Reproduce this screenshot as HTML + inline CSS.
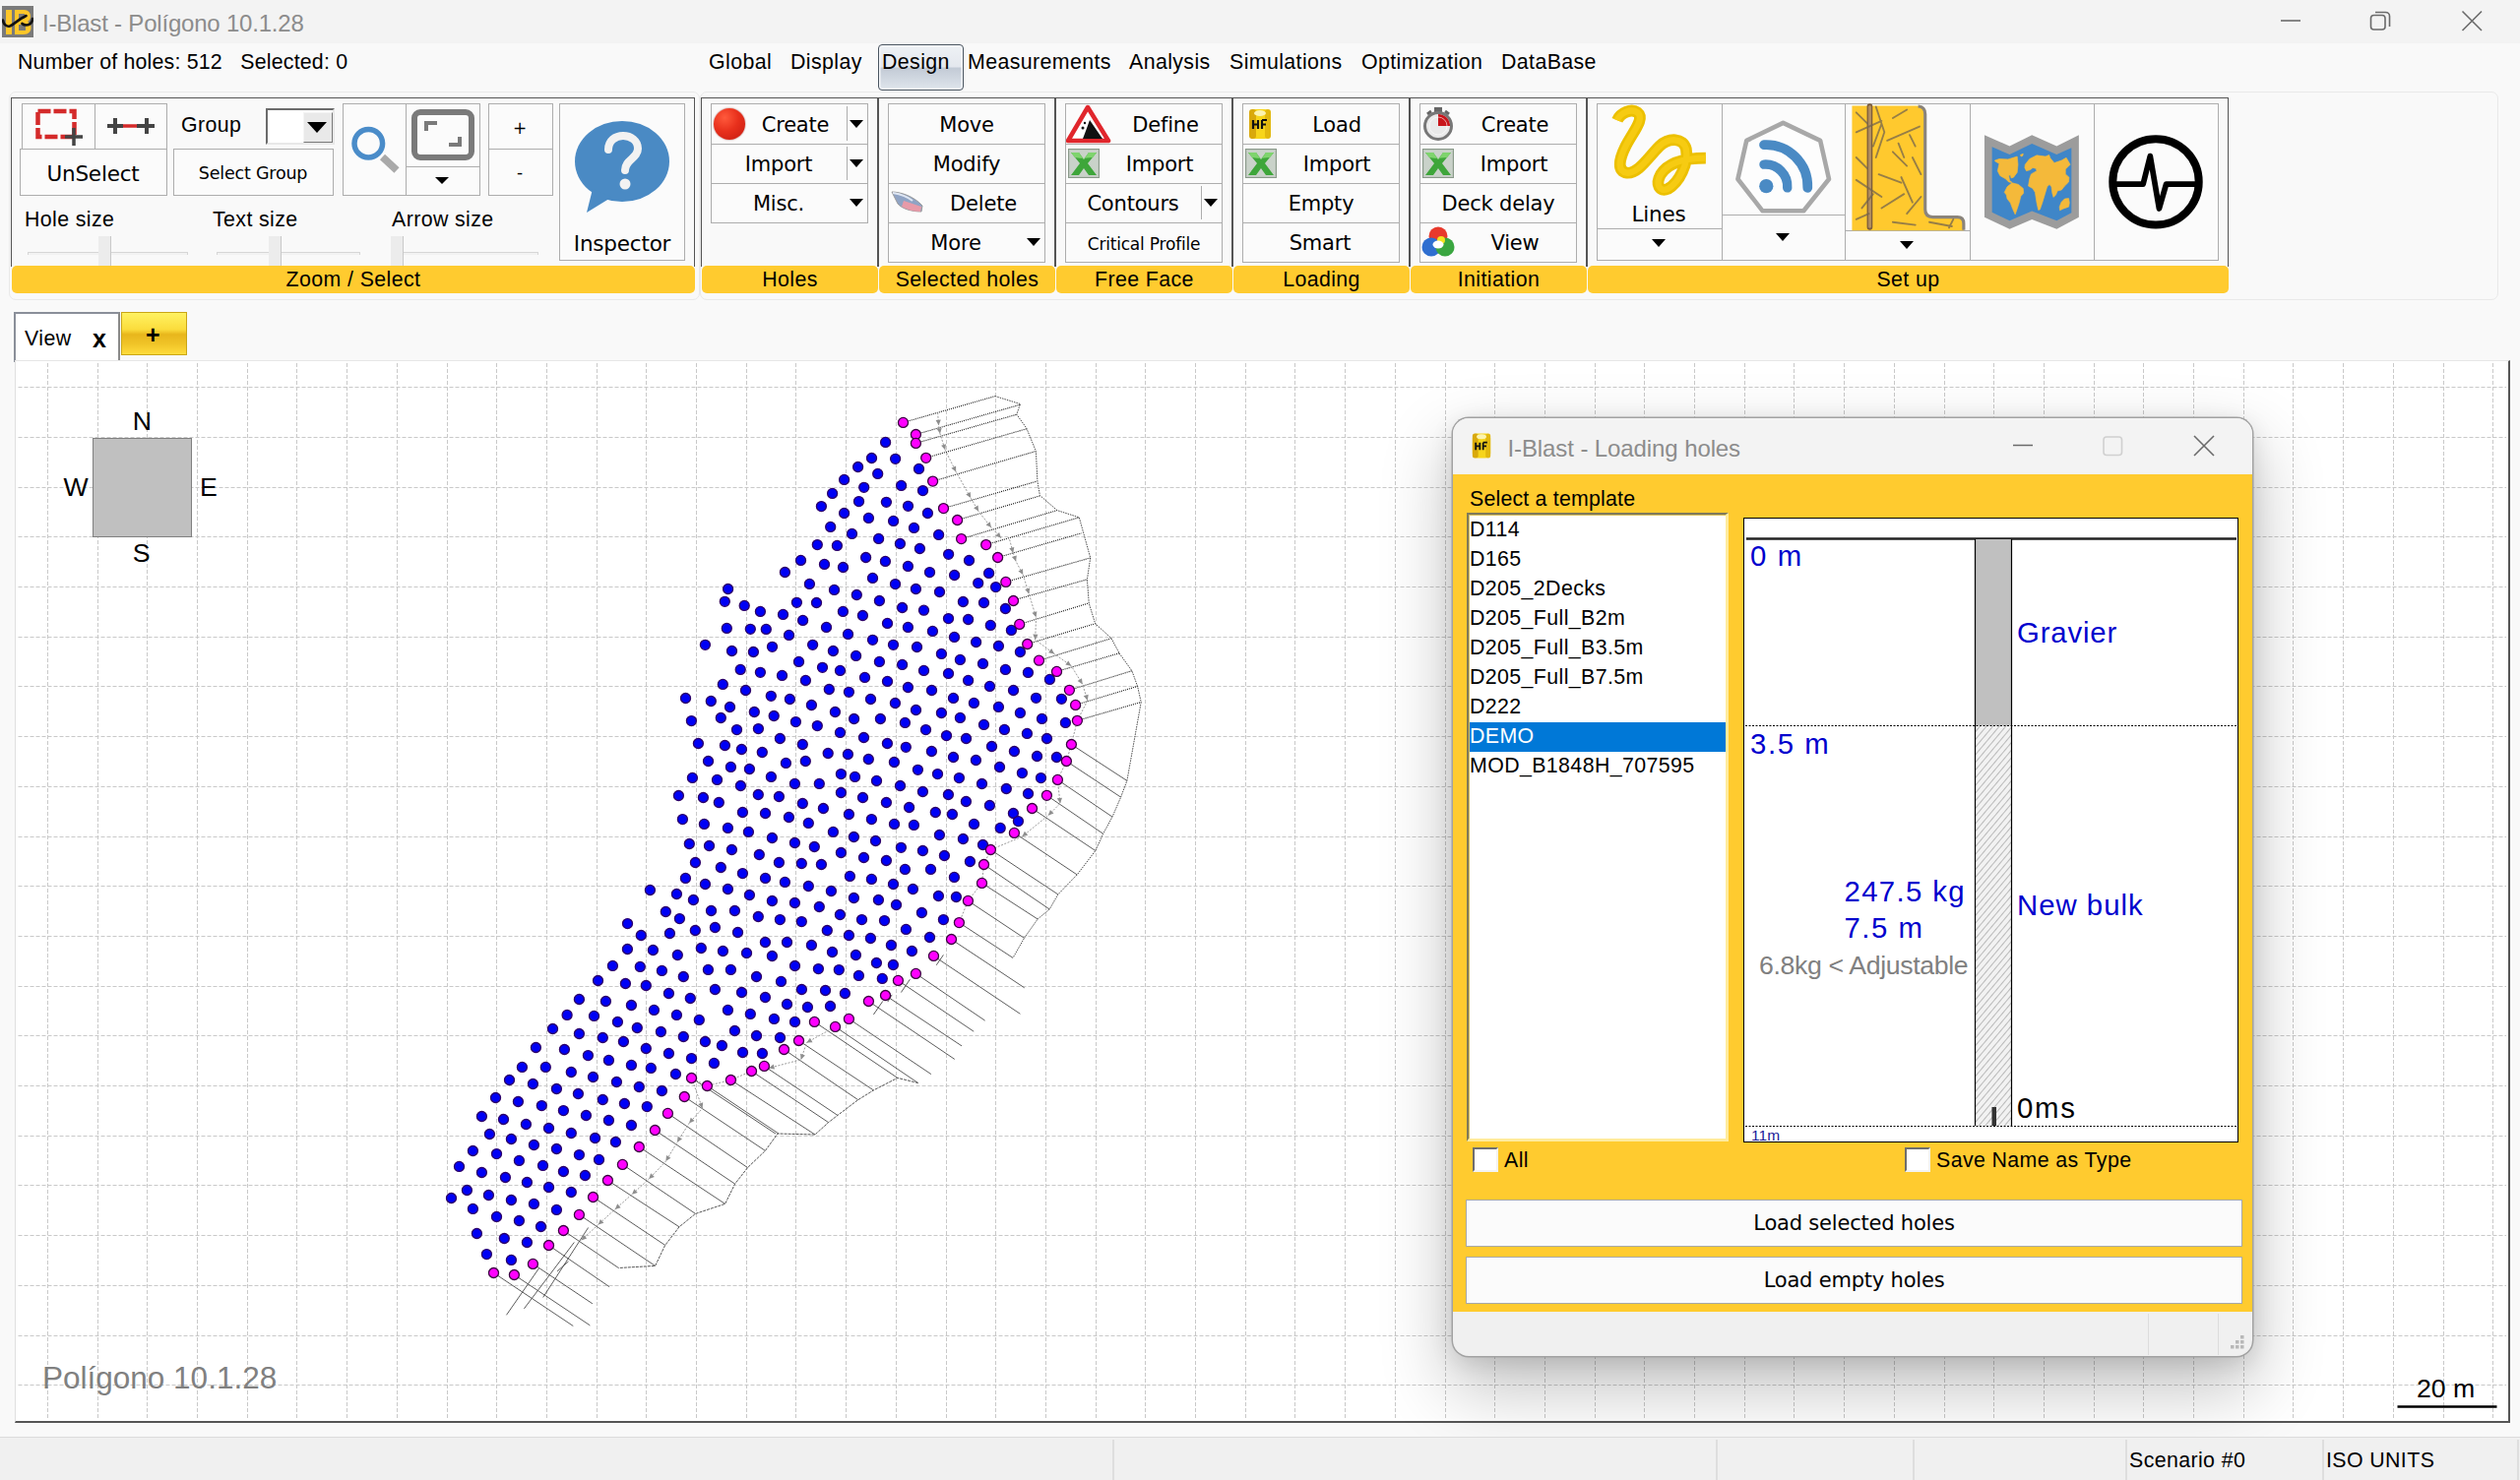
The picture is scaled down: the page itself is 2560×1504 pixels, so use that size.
<!DOCTYPE html>
<html lang="en">
<head>
<meta charset="utf-8">
<title>I-Blast - Polígono 10.1.28</title>
<style>
*{box-sizing:border-box;margin:0;padding:0}
html,body{width:2560px;height:1504px;overflow:hidden;background:#f9f9f9;font-family:"Liberation Sans",sans-serif;font-size:21.33px;color:#000;letter-spacing:0.4px}
.a{position:absolute}
.t{position:absolute;white-space:nowrap;line-height:1}
.cm{font-family:"DejaVu Sans","Liberation Sans",sans-serif;font-size:21px;letter-spacing:-0.2px}
#titlebar{left:0;top:0;width:2560px;height:44px;background:#f3f3f3}
#ribbon{left:10px;top:93px;width:2528px;height:212px;border:1.5px solid #e6e6e6;border-radius:7px;background:#f9f9f9}
.grp{position:absolute;top:99px;height:172px;border:1.2px solid #555;border-bottom:none;background:#f9f9f9}
.bar{position:absolute;top:270px;height:28px;background:#ffcb2f;border-radius:5px;text-align:center;line-height:29px;font-size:21.33px;letter-spacing:0.4px}
.btn{position:absolute;border:1px solid #adadad;background:#fbfbfb;text-align:center;white-space:nowrap}
.arr{position:absolute;width:0;height:0;border-left:7px solid transparent;border-right:7px solid transparent;border-top:8px solid #000}
#status{left:0;top:1460px;width:2560px;height:44px;background:#f0f0f0;border-top:1.5px solid #dcdcdc}
#canvas{left:15px;top:366px;width:2535px;height:1080px;background:#fff;border-top:1.5px solid #e6e6e6;border-left:1.5px solid #e0e0e0;border-right:2px solid #555;border-bottom:2px solid #555;overflow:hidden}
</style>
</head>
<body>
<div class="a" id="titlebar">
 <svg class="a" style="left:2px;top:6px" width="32" height="32" viewBox="0 0 32 32">
  <rect width="32" height="32" fill="#7a7a7a"/>
  <rect x="4" y="4" width="6" height="25" fill="#ffc629"/>
  <path d="M13 4h9c5 0 7 3 7 6.5 0 2.500-1 4.500-3 5.500 2.500 1 3.500 3 3.500 6 0 4-2.500 7-7.500 7h-9z" fill="#ffc629"/>
  <rect x="17" y="8" width="6" height="5" fill="#7a7a7a"/><rect x="17" y="19" width="7" height="6" fill="#7a7a7a"/>
  <path d="M1 14.500C1.500 19 5 21.500 8 20.500C12 19 16 14 24.500 10M31 13C31 17 28 19.500 25 19.500C23 19.500 21.500 19 20.500 18" fill="none" stroke="#111" stroke-width="2.600" stroke-linecap="round"/>
 </svg>
 <div class="t" style="left:43px;top:11.5px;font-size:24px;color:#8c8c8c;letter-spacing:-0.2px">I-Blast - Polígono 10.1.28</div>
 <svg class="a" style="left:2300px;top:0" width="260" height="44" viewBox="0 0 260 44" fill="none" stroke="#6a6a6a" stroke-width="1.600">
  <path d="M17 21h20"/>
  <rect x="108.500" y="15.500" width="14.500" height="14.500" rx="3"/>
  <path d="M113 12.500h10.500a4 4 0 0 1 4 4V27"/>
  <path d="M201.500 11.500l19.500 19.500M221 11.500l-19.500 19.500"/>
 </svg>
</div>

<div class="t" style="left:18px;top:52.5px;letter-spacing:0.2px">Number of holes: 512&nbsp;&nbsp; Selected: 0</div>
<div class="a" style="left:892px;top:45px;width:87px;height:47px;border:1.5px solid #4a5560;border-radius:4px;background:linear-gradient(#eef1f5 0%,#e4e8ee 48%,#c3cbd6 52%,#dfe5ec 100%);box-shadow:inset 0 0 0 1.5px #f4f6f9"></div>
<div class="t" style="left:720px;top:52.5px">Global</div>
<div class="t" style="left:803px;top:52.5px">Display</div>
<div class="t" style="left:896px;top:52.5px">Design</div>
<div class="t" style="left:983px;top:52.5px">Measurements</div>
<div class="t" style="left:1147px;top:52.5px">Analysis</div>
<div class="t" style="left:1249px;top:52.5px">Simulations</div>
<div class="t" style="left:1383px;top:52.5px">Optimization</div>
<div class="t" style="left:1525px;top:52.5px">DataBase</div>

<div class="a" style="left:9px;top:93px;width:702px;height:212px;border:1.5px solid #e9e9e9;border-radius:7px"></div>
<div class="a" style="left:711px;top:93px;width:1827px;height:212px;border:1.5px solid #e9e9e9;border-radius:7px"></div>
<div class="grp" style="left:10.8px;width:695.2px"></div><div class="bar" style="left:12.2px;width:693.6px">Zoom / Select</div>
<div class="grp" style="left:711.8px;width:180.2px"></div><div class="bar" style="left:713.2px;width:178.6px">Holes</div>
<div class="grp" style="left:891.8px;width:180.2px"></div><div class="bar" style="left:893.2px;width:178.6px">Selected holes</div>
<div class="grp" style="left:1071.8px;width:180.2px"></div><div class="bar" style="left:1073.2px;width:178.6px">Free Face</div>
<div class="grp" style="left:1251.8px;width:180.2px"></div><div class="bar" style="left:1253.2px;width:178.6px">Loading</div>
<div class="grp" style="left:1431.8px;width:180.2px"></div><div class="bar" style="left:1433.2px;width:178.6px">Initiation</div>
<div class="grp" style="left:1611.8px;width:652.2px"></div><div class="bar" style="left:1613.2px;width:650.6px">Set up</div>
<div class="btn" style="left:22px;top:105px;width:75px;height:47px;"></div>
<div class="btn" style="left:96px;top:105px;width:74px;height:47px;"></div>
<div class="btn" style="left:20px;top:151px;width:150px;height:48px;"></div>
<div class="t cm" style="left:-205.5px;width:600px;text-align:center;top:165.6px;font-size:21.5px;">UnSelect</div>
<div class="t " style="left:184px;top:117.4px;font-size:21.33px;">Group</div>
<div class="a" style="left:270px;top:110px;width:70px;height:37px;background:#fff;border:2px solid #6b6b6b;border-right-color:#e8e8e8;border-bottom-color:#e8e8e8"></div>
<div class="a" style="left:308px;top:114px;width:30px;height:31px;background:#e9e9e9;border:1.5px solid #f4f4f4;border-right-color:#7a7a7a;border-bottom-color:#7a7a7a"></div>
<div class="arr" style="left:312.0px;top:123.5px;border-left-width:10.5px;border-right-width:10.5px;border-top-width:11px"></div>
<div class="btn" style="left:176px;top:151px;width:163px;height:48px;"></div>
<div class="t cm" style="left:-43px;width:600px;text-align:center;top:167.5px;font-size:17.5px;">Select Group</div>
<div class="btn" style="left:348px;top:105px;width:65px;height:94px;"></div>
<div class="btn" style="left:412px;top:105px;width:76px;height:65px;"></div>
<div class="btn" style="left:412px;top:169px;width:76px;height:30px;"></div>
<div class="arr" style="left:442.0px;top:179.5px;border-left-width:7.0px;border-right-width:7.0px;border-top-width:7px"></div>
<div class="btn" style="left:496px;top:105px;width:66px;height:47px;"></div>
<div class="btn" style="left:496px;top:151px;width:66px;height:48px;"></div>
<div class="t cm" style="left:228px;width:600px;text-align:center;top:122.1px;font-size:17px;">+</div>
<div class="t cm" style="left:228px;width:600px;text-align:center;top:167.1px;font-size:17px;">-</div>
<div class="btn" style="left:568px;top:105px;width:128px;height:160px;"></div>
<div class="t cm" style="left:332px;width:600px;text-align:center;top:236.8px;font-size:21.5px;">Inspector</div>
<div class="t " style="left:25px;top:212.9px;font-size:21.33px;">Hole size</div>
<div class="t " style="left:216px;top:212.9px;font-size:21.33px;">Text size</div>
<div class="t " style="left:398px;top:212.9px;font-size:21.33px;">Arrow size</div>
<div class="a" style="left:28px;top:256px;width:163px;height:3px;border:1px solid #d6d6d6;border-bottom:none;background:#f2f2f2"></div><div class="a" style="left:100px;top:240px;width:13px;height:30px;background:#ececec;border-right:1.5px solid #c9c9c9"></div>
<div class="a" style="left:220px;top:256px;width:146px;height:3px;border:1px solid #d6d6d6;border-bottom:none;background:#f2f2f2"></div><div class="a" style="left:273px;top:240px;width:13px;height:30px;background:#ececec;border-right:1.5px solid #c9c9c9"></div>
<div class="a" style="left:397px;top:256px;width:150px;height:3px;border:1px solid #d6d6d6;border-bottom:none;background:#f2f2f2"></div><div class="a" style="left:397px;top:240px;width:13px;height:30px;background:#ececec;border-right:1.5px solid #c9c9c9"></div>
<svg class="a" style="left:34px;top:108px" width="52" height="40" viewBox="0 0 52 40"><rect x="4.500" y="5" width="37" height="26" fill="none" stroke="#d42a2a" stroke-width="4.500" stroke-dasharray="13 3"/><path d="M32 31h18M41 22v18" stroke="#444" stroke-width="3.500"/></svg>
<svg class="a" style="left:106px;top:114px" width="54" height="28" viewBox="0 0 54 28"><path d="M9 14h36" stroke="#d42a2a" stroke-width="3.500"/><path d="M3 14h16M11 6v16M33 14h18M43 6v16" stroke="#444" stroke-width="4"/></svg>
<svg class="a" style="left:352px;top:124px" width="58" height="58" viewBox="0 0 58 58"><path d="M36.500 35.500l14.500 13.500" stroke="#a9a9a9" stroke-width="7.500" stroke-linecap="butt"/><circle cx="22.300" cy="21.700" r="14.300" fill="none" stroke="#4a8cc9" stroke-width="5.500"/></svg>
<svg class="a" style="left:416px;top:109px" width="68" height="56" viewBox="0 0 68 56" fill="none" stroke="#7a7a7a"><rect x="5" y="5" width="58" height="46" rx="6" stroke-width="6"/><path d="M17 24v-8h11M51 30v8h-11" stroke-width="4"/></svg>
<svg class="a" style="left:580px;top:120px" width="104" height="100" viewBox="0 0 104 100"><ellipse cx="52" cy="44" rx="48" ry="41" fill="#4a8ac4"/><path d="M22 72l-6 24 26-16z" fill="#4a8ac4"/><path d="M38 32c0-9 7-14 15-14s15 5 15 13c0 10-13 11-13 22" fill="none" stroke="#f2f2f2" stroke-width="8" stroke-linecap="round"/><circle cx="55" cy="67" r="5.500" fill="#f2f2f2"/></svg>
<div class="btn" style="left:722px;top:105px;width:160px;height:41.5px;"></div>
<div class="btn" style="left:722px;top:145.5px;width:160px;height:41.0px;"></div>
<div class="btn" style="left:722px;top:185.5px;width:160px;height:41.0px;"></div>
<div class="a" style="left:860px;top:108px;width:1px;height:35px;background:#adadad"></div>
<div class="a" style="left:860px;top:149px;width:1px;height:34px;background:#adadad"></div>
<div class="a" style="left:725px;top:110px;width:32px;height:32px;border-radius:50%;background:radial-gradient(circle at 35% 30%,#ff5a3c 0%,#e8301c 45%,#c41a10 100%);box-shadow:0 0 1.5px #8a2a20"></div>
<div class="t cm" style="left:508px;width:600px;text-align:center;top:116.7px;font-size:21px;">Create</div>
<div class="t cm" style="left:491px;width:600px;text-align:center;top:157.2px;font-size:21px;">Import</div>
<div class="t cm" style="left:491px;width:600px;text-align:center;top:197.2px;font-size:21px;">Misc.</div>
<div class="arr" style="left:863.0px;top:122.0px;border-left-width:7.5px;border-right-width:7.5px;border-top-width:8px"></div>
<div class="arr" style="left:863.0px;top:162.0px;border-left-width:7.5px;border-right-width:7.5px;border-top-width:8px"></div>
<div class="arr" style="left:863.0px;top:202.0px;border-left-width:7.5px;border-right-width:7.5px;border-top-width:8px"></div>
<div class="btn" style="left:902px;top:105px;width:160px;height:41.5px;"></div>
<div class="btn" style="left:902px;top:145.5px;width:160px;height:41.0px;"></div>
<div class="btn" style="left:902px;top:185.5px;width:160px;height:41.0px;"></div>
<div class="btn" style="left:902px;top:225.5px;width:160px;height:41.5px;"></div>
<div class="t cm" style="left:682px;width:600px;text-align:center;top:116.7px;font-size:21px;">Move</div>
<div class="t cm" style="left:682px;width:600px;text-align:center;top:157.2px;font-size:21px;">Modify</div>
<div class="t cm" style="left:699px;width:600px;text-align:center;top:197.2px;font-size:21px;">Delete</div>
<div class="t cm" style="left:671px;width:600px;text-align:center;top:237.2px;font-size:21px;">More</div>
<div class="arr" style="left:1043.0px;top:242.0px;border-left-width:7.5px;border-right-width:7.5px;border-top-width:8px"></div>
<svg class="a" style="left:904px;top:192px" width="36" height="26" viewBox="0 0 36 26"><path d="M2 3c8 0 22 4 31 14l-1 6c-10 0-20-3-24-8z" fill="#8fa3c4" stroke="#9a9a9a" stroke-width="1"/><path d="M14 12l18 6-1 5c-7 0-14-2-19-5z" fill="#e79aa8"/><path d="M3 4c6 1 14 3 20 8" stroke="#dfe6f2" stroke-width="2" fill="none"/></svg>
<div class="btn" style="left:1082px;top:105px;width:160px;height:41.5px;"></div>
<div class="btn" style="left:1082px;top:145.5px;width:160px;height:41.0px;"></div>
<div class="btn" style="left:1082px;top:185.5px;width:160px;height:41.0px;"></div>
<div class="btn" style="left:1082px;top:225.5px;width:160px;height:41.5px;"></div>
<div class="a" style="left:1220px;top:189px;width:1px;height:34px;background:#adadad"></div>
<div class="t cm" style="left:884px;width:600px;text-align:center;top:116.7px;font-size:21px;">Define</div>
<div class="t cm" style="left:878px;width:600px;text-align:center;top:157.2px;font-size:21px;">Import</div>
<div class="t cm" style="left:851px;width:600px;text-align:center;top:197.2px;font-size:21px;">Contours</div>
<div class="t cm" style="left:862px;width:600px;text-align:center;top:239.6px;font-size:17px;">Critical Profile</div>
<div class="arr" style="left:1223.0px;top:202.0px;border-left-width:7.5px;border-right-width:7.5px;border-top-width:8px"></div>
<svg class="a" style="left:1083px;top:106px" width="46" height="40" viewBox="0 0 46 40"><path d="M22 3L43 37H2z" fill="#fff" stroke="#e0262c" stroke-width="4.500" stroke-linejoin="round"/><path d="M24 16l13 19H17l3-8z" fill="#111"/><circle cx="17" cy="24" r="1.500" fill="#111"/><circle cx="19" cy="19" r="1.200" fill="#111"/></svg>
<svg class="a" style="left:1085px;top:151px" width="32" height="30" viewBox="0 0 32 30"><rect x="0.500" y="0.500" width="31" height="29" fill="#bfc8bf" stroke="#8a9a8a"/><rect x="2" y="2" width="28" height="26" fill="#c9d2c9"/><path d="M3 4h8l5 7 5-7h8l-9 11 9 12h-8l-5-7-5 7H3l9-12z" fill="#3ea63a"/><path d="M3 4h8l5 7 5-7h8l-4 5c-8 1-14 1-18 0z" fill="#7fd46e"/></svg>
<div class="btn" style="left:1262px;top:105px;width:160px;height:41.5px;"></div>
<div class="btn" style="left:1262px;top:145.5px;width:160px;height:41.0px;"></div>
<div class="btn" style="left:1262px;top:185.5px;width:160px;height:41.0px;"></div>
<div class="btn" style="left:1262px;top:225.5px;width:160px;height:41.5px;"></div>
<div class="t cm" style="left:1058px;width:600px;text-align:center;top:116.7px;font-size:21px;">Load</div>
<div class="t cm" style="left:1058px;width:600px;text-align:center;top:157.2px;font-size:21px;">Import</div>
<div class="t cm" style="left:1042px;width:600px;text-align:center;top:197.2px;font-size:21px;">Empty</div>
<div class="t cm" style="left:1041px;width:600px;text-align:center;top:237.2px;font-size:21px;">Smart</div>
<svg class="a" style="left:1265px;top:151px" width="32" height="30" viewBox="0 0 32 30"><rect x="0.500" y="0.500" width="31" height="29" fill="#bfc8bf" stroke="#8a9a8a"/><rect x="2" y="2" width="28" height="26" fill="#c9d2c9"/><path d="M3 4h8l5 7 5-7h8l-9 11 9 12h-8l-5-7-5 7H3l9-12z" fill="#3ea63a"/><path d="M3 4h8l5 7 5-7h8l-4 5c-8 1-14 1-18 0z" fill="#7fd46e"/></svg>
<svg class="a" style="left:1268px;top:110px" width="24" height="32" viewBox="0 0 24 32"><rect x="1" y="1" width="22" height="30" rx="6" fill="#f7d51c"/><rect x="1" y="1" width="7" height="30" rx="3" fill="#d9a90c"/><rect x="17" y="1" width="6" height="30" rx="3" fill="#e2b80f"/><ellipse cx="12" cy="5" rx="6" ry="3" fill="#fbf3b0"/><path d="M5 12v9M5 16.500h5M10 12v9M14 12v9M14 12h5M14 16.500h4" stroke="#111" stroke-width="2.200" fill="none"/></svg>
<div class="btn" style="left:1442px;top:105px;width:160px;height:41.5px;"></div>
<div class="btn" style="left:1442px;top:145.5px;width:160px;height:41.0px;"></div>
<div class="btn" style="left:1442px;top:185.5px;width:160px;height:41.0px;"></div>
<div class="btn" style="left:1442px;top:225.5px;width:160px;height:41.5px;"></div>
<div class="t cm" style="left:1239px;width:600px;text-align:center;top:116.7px;font-size:21px;">Create</div>
<div class="t cm" style="left:1238px;width:600px;text-align:center;top:157.2px;font-size:21px;">Import</div>
<div class="t cm" style="left:1222px;width:600px;text-align:center;top:197.2px;font-size:21px;">Deck delay</div>
<div class="t cm" style="left:1239px;width:600px;text-align:center;top:237.2px;font-size:21px;">View</div>
<svg class="a" style="left:1445px;top:151px" width="32" height="30" viewBox="0 0 32 30"><rect x="0.500" y="0.500" width="31" height="29" fill="#bfc8bf" stroke="#8a9a8a"/><rect x="2" y="2" width="28" height="26" fill="#c9d2c9"/><path d="M3 4h8l5 7 5-7h8l-9 11 9 12h-8l-5-7-5 7H3l9-12z" fill="#3ea63a"/><path d="M3 4h8l5 7 5-7h8l-4 5c-8 1-14 1-18 0z" fill="#7fd46e"/></svg>
<svg class="a" style="left:1445px;top:108px" width="32" height="36" viewBox="0 0 32 36"><rect x="12" y="1" width="8" height="5" fill="#666"/><path d="M5 8l4-3M27 8l-4-3" stroke="#666" stroke-width="3"/><circle cx="16" cy="20" r="13.500" fill="#e9e9e9" stroke="#777" stroke-width="3"/><path d="M16 20V8a12 12 0 0 1 12 12z" fill="#c8141a"/><circle cx="16" cy="20" r="9" fill="none" stroke="#fff" stroke-width="1" opacity=".6"/></svg>
<svg class="a" style="left:1444px;top:229px" width="34" height="34" viewBox="0 0 34 34"><circle cx="17" cy="11" r="9.500" fill="#e8392c"/><circle cx="10" cy="22" r="9.500" fill="#2f6fd0"/><circle cx="24" cy="22" r="9.500" fill="#3aa640"/><circle cx="20" cy="15" r="4" fill="#f4e31f"/><ellipse cx="17" cy="19.500" rx="5.500" ry="4" fill="#fff"/></svg>
<div class="btn" style="left:1622px;top:105px;width:128px;height:160px;"></div>
<div class="btn" style="left:1749px;top:105px;width:126px;height:160px;"></div>
<div class="btn" style="left:1874px;top:105px;width:128px;height:160px;"></div>
<div class="btn" style="left:2001px;top:105px;width:127px;height:160px;"></div>
<div class="btn" style="left:2127px;top:105px;width:127px;height:160px;"></div>
<div class="a" style="left:1623px;top:232px;width:126px;height:1px;background:#adadad"></div>
<div class="a" style="left:1750px;top:218px;width:124px;height:1px;background:#adadad"></div>
<div class="a" style="left:1875px;top:234px;width:126px;height:1px;background:#adadad"></div>
<div class="arr" style="left:1678.0px;top:243.0px;border-left-width:7.5px;border-right-width:7.5px;border-top-width:8px"></div>
<div class="arr" style="left:1804.0px;top:237.0px;border-left-width:7.5px;border-right-width:7.5px;border-top-width:8px"></div>
<div class="arr" style="left:1930.0px;top:245.0px;border-left-width:7.5px;border-right-width:7.5px;border-top-width:8px"></div>
<div class="t cm" style="left:1385px;width:600px;text-align:center;top:207.3px;font-size:21.5px;">Lines</div>
<svg class="a" style="left:1400px;top:0px" width="720" height="380" viewBox="0 0 2520 1330"><path d="M850 428C862 400 900 385 922 400C950 422 905 470 880 520C855 570 850 610 885 615C925 618 960 560 1000 520C1035 488 1085 490 1095 530C1105 580 1070 650 1030 672C1000 685 985 655 1005 620C1030 580 1080 562 1165 562" fill="none" stroke="#ecc000" stroke-width="41" stroke-linecap="butt" stroke-linejoin="round"/><path d="M850 428C862 400 900 385 922 400C950 422 905 470 880 520C855 570 850 610 885 615C925 618 960 560 1000 520C1035 488 1085 490 1095 530C1105 580 1070 650 1030 672C1000 685 985 655 1005 620C1030 580 1080 562 1165 562" fill="none" stroke="#f6cb12" stroke-width="22" stroke-linecap="butt" stroke-linejoin="round"/><path d="M1440 437L1572 500L1603 637L1513 750H1367L1279 637L1310 500Z" fill="#fdfdfd" stroke="#a8a8a8" stroke-width="16" stroke-linejoin="round"/><circle cx="1380" cy="662" r="25" fill="#4a8ac4"/><path d="M1372 585A78 78 0 0 1 1455 668" fill="none" stroke="#4a8ac4" stroke-width="33" stroke-linecap="round"/><path d="M1372 515A148 148 0 0 1 1527 668" fill="none" stroke="#4a8ac4" stroke-width="34" stroke-linecap="round"/><path d="M1685 376H1915Q1945 376 1945 406V745Q1945 772 1972 772H2060Q2082 772 2082 795V820H1685Z" fill="#ffc92e"/><path d="M1920 378Q1945 380 1945 406V745Q1945 772 1972 772H2060Q2082 772 2082 795V818" fill="none" stroke="#8a847c" stroke-width="11"/><path d="M1748 378V808" stroke="#7a5c3c" stroke-width="20" stroke-linecap="round"/><path d="M1748 380V806" stroke="#b08c5e" stroke-width="11" stroke-linecap="round"/><path d="M1700 470L1790 430M1770 380L1800 470M1800 470L1770 560M1830 420L1880 390M1810 500L1925 450M1830 540L1880 590M1850 510L1870 560M1890 480L1910 520M1700 640L1790 700M1780 620L1860 650M1860 630L1900 720M1790 740L1870 690M1830 790L1910 800M1880 760L1930 700M1700 560L1740 600M1760 690L1720 740M1900 560L1930 620M1960 790L2040 805M2030 810L2045 780M1700 780L1745 760M1790 440L1760 520M1700 400L1740 440" stroke="#75664e" stroke-width="6.500" stroke-linecap="round" opacity=".75"/></svg>
<svg class="a" style="left:1840px;top:0px" width="720" height="380" viewBox="0 0 2520 1330"><circle cx="1225" cy="647" r="153" fill="none" stroke="#000" stroke-width="28"/><path d="M1075 655H1180L1205 555L1237 742L1262 655H1375" fill="none" stroke="#000" stroke-width="20" stroke-linejoin="round" stroke-linecap="round"/></svg>
<svg class="a" style="left:2005px;top:125px" width="120" height="120" viewBox="0 0 1480 1480"><path d="M135 150L450 290L730 150L1040 290L1318 150L1318 1180L1040 1330L730 1210L450 1330L135 1180Z" fill="#9c9c9c"/><path d="M230 300L450 395L730 260L1040 395L1225 310L1225 1125L1040 1225L730 1105L450 1225L230 1120Z" fill="#3f86c8"/><path d="M265 470L320 450L430 455L545 420L555 520L545 620L500 680L470 690L460 650L440 660L450 720L480 745L440 740L400 700L330 660L300 600L320 510L270 480ZM480 750L560 770L620 820L625 880L590 920L570 1000L540 1090L520 1145L490 1080L460 1000L420 950L410 900L385 870L420 800ZM585 400L620 385L615 410L595 420ZM645 520L700 450L790 405L900 420L945 400L960 440L1010 500L1100 470L1160 435L1210 520L1150 580L1150 640L1195 680L1190 740L1140 790L1100 840L1050 850L1030 900L1000 930L985 880L975 800L950 770L920 800L890 900L860 1000L830 1085L810 1090L790 1000L770 870L740 820L685 790L700 700L720 640L790 600L780 570L740 560L720 580L700 590L660 600L640 560ZM1075 1050L1100 990L1140 950L1190 945L1200 1000L1190 1050L1120 1075L1080 1095Z" fill="#f4b93a" stroke="#f4b93a" stroke-width="8" stroke-linejoin="round"/></svg>

<div class="a" style="left:14px;top:317px;width:108px;height:51px;background:#fff;border-top:2px solid #8a8f99;border-left:2px solid #8a8f99;border-right:2.500px solid #8a8a8a"></div>
<div class="t" style="left:25px;top:333.5px;font-size:21.33px">View</div>
<div class="t" style="left:94px;top:331.5px;font-size:25px;font-weight:bold;letter-spacing:0">x</div>
<div class="a" style="left:123px;top:317px;width:67px;height:44px;border:1.5px solid #caa616;background:linear-gradient(#fff262 0%,#fbdc3c 40%,#e8b61c 52%,#f0c428 75%,#ffdc3c 100%)"></div>
<div class="t" style="left:148px;top:328px;font-size:25px;font-weight:bold;letter-spacing:0">+</div>
<div class="a" id="canvas"><svg class="a" style="left:-1.5px;top:-1.5px;font-family:'Liberation Sans',sans-serif" width="2535" height="1080" viewBox="0 0 2535 1080"><path d="M33.5 3V1075.5M84.5 3V1075.5M134.5 3V1075.5M185.5 3V1075.5M236.5 3V1075.5M286.5 3V1075.5M337.5 3V1075.5M388.5 3V1075.5M439.5 3V1075.5M489.5 3V1075.5M540.5 3V1075.5M591.5 3V1075.5M641.5 3V1075.5M692.5 3V1075.5M743.5 3V1075.5M793.5 3V1075.5M844.5 3V1075.5M895.5 3V1075.5M946.5 3V1075.5M996.5 3V1075.5M1047.5 3V1075.5M1098.5 3V1075.5M1148.5 3V1075.5M1199.5 3V1075.5M1250.5 3V1075.5M1300.5 3V1075.5M1351.5 3V1075.5M1402.5 3V1075.5M1453.5 3V1075.5M1503.5 3V1075.5M1554.5 3V1075.5M1605.5 3V1075.5M1655.5 3V1075.5M1706.5 3V1075.5M1757.5 3V1075.5M1807.5 3V1075.5M1858.5 3V1075.5M1909.5 3V1075.5M1960.5 3V1075.5M2010.5 3V1075.5M2061.5 3V1075.5M2112.5 3V1075.5M2162.5 3V1075.5M2213.5 3V1075.5M2264.5 3V1075.5M2314.5 3V1075.5M2365.5 3V1075.5M2416.5 3V1075.5M2467.5 3V1075.5M2517.5 3V1075.5" stroke="#c9c9c9" stroke-width="1" stroke-dasharray="4 2" fill="none"/>
<path d="M3.500 27.5H2531M3.500 78.5H2531M3.500 129.5H2531M3.500 179.5H2531M3.500 230.5H2531M3.500 281.5H2531M3.500 331.5H2531M3.500 382.5H2531M3.500 433.5H2531M3.500 484.5H2531M3.500 534.5H2531M3.500 585.5H2531M3.500 636.5H2531M3.500 686.5H2531M3.500 737.5H2531M3.500 788.5H2531M3.500 838.5H2531M3.500 889.5H2531M3.500 940.5H2531M3.500 991.5H2531M3.500 1041.5H2531" stroke="#c9c9c9" stroke-width="1" stroke-dasharray="4 2" fill="none"/>
<rect x="79.5" y="79.5" width="100" height="100" fill="#c0c0c0" stroke="#808080" stroke-width="1"/>
<text x="129.3" y="71.0" font-size="26.67" fill="#000" text-anchor="middle" letter-spacing="0">N</text>
<text x="128.7" y="205.0" font-size="26.67" fill="#000" text-anchor="middle" letter-spacing="0">S</text>
<text x="49.5" y="137.5" font-size="26.67" fill="#000" text-anchor="start" letter-spacing="0">W</text>
<text x="188.0" y="137.5" font-size="26.67" fill="#000" text-anchor="start" letter-spacing="0">E</text>
<text x="28.0" y="1044.5" font-size="31.5" fill="#808080" text-anchor="start" letter-spacing="0">Polígono 10.1.28</text>
<text x="2440.0" y="1054.0" font-size="26.67" fill="#000" text-anchor="start" letter-spacing="0">20 m</text>
<path d="M2420.5 1063.5H2521.5" stroke="#000" stroke-width="2.500"/>
<path d="M995.9 36.6L1021.4 44.5L1017.8 55.2L1027.8 69.1L1037.4 92.5L1038.9 123.1L1041.4 137.4L1058.9 152.6L1081.3 159.8L1092.7 200.9L1089.4 222.8L1091.2 246.9L1097.6 267.7L1114.1 282.7L1122.0 297.8L1134.9 315.7L1140.6 331.4L1144.2 347.5L1129.9 427.4L1123.6 444.1L1115.0 464.1L1105.7 481.3L1097.8 498.5L1079.2 522.9L1059.8 542.9L1051.2 558.0L1039.1 568.0L1025.5 587.3L1014.0 607.4" fill="none" stroke="#4a4a4a" stroke-width="1" stroke-dasharray="1.500 1"/>
<path d="M917.6 734.5L896.8 729.4L872.4 741.9L856.7 751.7L835.9 767.4L826.6 774.6L813.0 787.0L775.0 786.0L762.4 803.4L744.5 820.6L731.6 837.1L721.6 857.4L691.5 867.4L675.0 880.8L660.7 899.4L650.6 920.4L613.4 922.5" fill="none" stroke="#555" stroke-width="1" stroke-dasharray="3 1"/>
<path d="M902.5 63.4L995.9 36.6M915.4 75.5L1021.4 45.2M915.4 84.4L1017.8 55.2M925.7 99.3L1027.8 69.8M932.6 123.1L1037.4 92.5M943.5 150.6L1038.3 123.1M957.6 162.5L1041.4 137.9M961.6 181.6L1058.9 152.6M986.7 187.6L1081.3 159.8M998.6 200.5L1083.7 175.8M1006.8 225.4L1092.7 200.9M1014.7 243.9L1089.4 222.8M1020.7 268.4L1091.2 246.9M1028.7 288.5L1097.6 267.7M1040.5 305.2L1114.1 282.7M1058.5 316.4L1122.0 297.8M1071.4 335.3L1134.9 315.7M1077.6 350.4L1140.6 331.4M1079.4 366.3L1144.2 347.5" fill="none" stroke="#222" stroke-width="1.100" stroke-dasharray="1.100 1"/>
<path d="M1073.4 390.5L1129.9 427.4M1068.4 407.5L1123.6 444.1M1059.4 426.4L1115.0 464.1M1048.4 442.3L1105.7 481.3M1033.5 455.5L1097.8 498.5M1015.4 480.4L1079.2 522.9M991.4 497.5L1059.8 542.9M984.5 512.5L1051.2 558.0M982.5 531.4L1039.1 568.0M968.4 549.4L1025.5 587.3M959.4 571.6L1014.0 607.4M951.4 588.5L1025.7 637.8M933.5 605.5L1021.4 664.3M915.4 623.4L985.6 671.1M897.4 630.4L974.2 682.2M884.5 645.5L962.0 696.9M867.4 651.5L954.8 710.4M847.4 669.4L930.9 725.6M833.5 677.4L917.6 734.5M812.4 672.4L896.8 729.4M796.5 691.5L872.4 741.9M781.5 700.5L856.7 751.7M761.4 717.4L835.9 767.4M748.5 722.5L826.6 774.6M727.4 731.5L813.0 787.0M703.4 737.5L776.0 786.0M687.5 729.5L773.1 786.2M680.3 748.5L762.4 803.4M663.4 765.4L744.5 820.6M650.4 782.5L731.6 837.1M634.3 799.5L721.6 857.4M617.4 817.4L691.5 867.4M602.4 833.5L675.0 880.8M587.5 850.5L660.7 899.4M573.4 868.4L650.6 920.4M557.4 884.5L613.4 922.5M542.5 899.5L604.1 941.7M526.4 918.4L586.9 958.8M507.4 929.5L584.4 980.9M486.5 927.5L567.3 981.5M582.6 881.5L536.7 952.4M568.3 896.5L517.4 963.9M532.4 923.0L499.5 970.3M562.5 915.9L551.1 925.9M936.2 614.8L943.4 604.4M900.4 642.5L909.4 629.2M872.4 665.0L881.8 651.4M886.8 652.1L891.1 644.9" fill="none" stroke="#4a4a4a" stroke-width="0.900"/>
<path d="M937.6 53.3L938.6 66.2L940.0 74.8L945.2 91.3L956.2 113.5L971.2 140.0L979.1 153.6L992.0 170.1L1002.0 180.8M1010.6 182.3L1014.2 195.9L1017.1 204.5L1024.3 218.1L1030.3 237.4L1037.5 261.2L1036.7 284.2L1056.1 298.5L1073.3 310.7L1084.7 329.3L1089.8 345.8M1059.4 426.9L1062.0 450.5L1049.8 462.7L1023.3 484.2M833.5 677.4L804.4 693.6L798.7 710.8L766.0 719.4M748.5 722.5L727.4 731.5M703.4 737.5L687.5 729.5M687.5 729.5L698.6 760.3L685.0 775.5L672.9 794.8L661.4 814.1L644.2 832.1L627.0 847.8L609.8 862.9L592.6 878.6L575.4 894.4M1089.8 345.8L1079.4 366.3L1073.4 390.5L1068.4 407.5L1059.4 426.4M1023.3 484.2L991.4 497.5L984.5 512.5L982.5 531.4L968.4 549.4L959.4 571.6M727.4 731.5L703.4 737.5" fill="none" stroke="#9a9a9a" stroke-width="1" stroke-dasharray="2 1.500"/>
<path d="M938.6 66.2L935.6 60.9L940.8 60.5ZM940.0 74.8L936.6 69.8L941.7 69.0ZM945.2 91.3L941.1 86.8L946.0 85.3ZM956.2 113.5L951.4 109.7L956.1 107.4ZM971.2 140.0L966.2 136.5L970.8 133.9ZM979.1 153.6L974.1 150.2L978.6 147.5ZM992.0 170.1L986.6 167.4L990.7 164.2ZM1002.0 180.8L996.3 178.6L1000.1 175.0ZM1014.2 195.9L1010.3 191.2L1015.3 189.9ZM1017.1 204.5L1012.9 200.1L1017.8 198.5ZM1024.3 218.1L1019.4 214.5L1024.0 212.0ZM1030.3 237.4L1026.2 232.9L1031.2 231.4ZM1037.5 261.2L1033.4 256.7L1038.4 255.2ZM1036.7 284.2L1034.3 278.6L1039.5 278.8ZM1056.1 298.5L1050.1 297.3L1053.2 293.1ZM1073.3 310.7L1067.3 309.6L1070.3 305.4ZM1084.7 329.3L1079.6 326.0L1084.0 323.3ZM1089.8 345.8L1085.7 341.3L1090.7 339.8ZM1062.0 450.5L1058.8 445.3L1064.0 444.7ZM1049.8 462.7L1051.9 457.0L1055.5 460.6ZM1023.3 484.2L1025.9 478.7L1029.2 482.8ZM804.4 693.6L807.9 688.7L810.5 693.2ZM798.7 710.8L798.0 704.8L802.9 706.4ZM766.0 719.4L770.7 715.5L772.0 720.5ZM727.4 731.5L731.4 727.0L733.5 731.7ZM687.5 729.5L693.6 729.6L691.2 734.3ZM698.6 760.3L694.3 756.0L699.2 754.2ZM685.0 775.5L686.7 769.7L690.6 773.1ZM672.9 794.8L673.6 788.8L678.0 791.5ZM661.4 814.1L662.0 808.0L666.4 810.7ZM644.2 832.1L646.1 826.3L649.9 829.9ZM627.0 847.8L629.3 842.2L632.8 846.0ZM609.8 862.9L612.2 857.3L615.6 861.2ZM592.6 878.6L594.9 873.0L598.4 876.8ZM575.4 894.4L577.7 888.8L581.2 892.6Z" fill="#8e8e8e"/>
<g fill="#0000f5" stroke="#2c0068" stroke-width="1.300"><circle cx="884.6" cy="83.4" r="5"/><circle cx="870.5" cy="99.5" r="5"/><circle cx="894.6" cy="100.3" r="5"/><circle cx="856.6" cy="108.5" r="5"/><circle cx="918.5" cy="110.4" r="5"/><circle cx="876.7" cy="115.4" r="5"/><circle cx="842.6" cy="121.4" r="5"/><circle cx="900.6" cy="127.4" r="5"/><circle cx="862.7" cy="129.3" r="5"/><circle cx="922.5" cy="132.6" r="5"/><circle cx="830.6" cy="135.4" r="5"/><circle cx="857.5" cy="143.6" r="5"/><circle cx="885.4" cy="144.3" r="5"/><circle cx="819.4" cy="148.6" r="5"/><circle cx="907.5" cy="148.3" r="5"/><circle cx="842.6" cy="155.5" r="5"/><circle cx="927.4" cy="155.5" r="5"/><circle cx="867.4" cy="160.4" r="5"/><circle cx="892.6" cy="163.4" r="5"/><circle cx="828.7" cy="169.4" r="5"/><circle cx="913.5" cy="170.4" r="5"/><circle cx="850.5" cy="176.4" r="5"/><circle cx="938.6" cy="177.4" r="5"/><circle cx="877.6" cy="181.4" r="5"/><circle cx="899.4" cy="186.5" r="5"/><circle cx="815.3" cy="187.6" r="5"/><circle cx="835.4" cy="188.4" r="5"/><circle cx="919.4" cy="191.5" r="5"/><circle cx="948.6" cy="197.3" r="5"/><circle cx="864.6" cy="200.5" r="5"/><circle cx="798.5" cy="203.4" r="5"/><circle cx="969.5" cy="203.5" r="5"/><circle cx="884.4" cy="204.4" r="5"/><circle cx="822.5" cy="207.4" r="5"/><circle cx="907.4" cy="209.4" r="5"/><circle cx="841.5" cy="210.5" r="5"/><circle cx="929.5" cy="215.6" r="5"/><circle cx="989.6" cy="216.4" r="5"/><circle cx="782.4" cy="215.5" r="5"/><circle cx="954.6" cy="218.5" r="5"/><circle cx="871.5" cy="221.4" r="5"/><circle cx="978.7" cy="226.6" r="5"/><circle cx="807.4" cy="227.4" r="5"/><circle cx="894.5" cy="227.6" r="5"/><circle cx="996.6" cy="230.6" r="5"/><circle cx="915.4" cy="232.5" r="5"/><circle cx="832.5" cy="233.4" r="5"/><circle cx="939.5" cy="235.5" r="5"/><circle cx="855.3" cy="238.5" r="5"/><circle cx="794.4" cy="246.3" r="5"/><circle cx="814.5" cy="246.5" r="5"/><circle cx="878.4" cy="244.5" r="5"/><circle cx="963.4" cy="245.5" r="5"/><circle cx="984.5" cy="246.5" r="5"/><circle cx="724.6" cy="232.5" r="5"/><circle cx="721.3" cy="245.3" r="5"/><circle cx="741.2" cy="249.4" r="5"/><circle cx="901.6" cy="251.5" r="5"/><circle cx="923.5" cy="254.2" r="5"/><circle cx="757.4" cy="255.4" r="5"/><circle cx="841.4" cy="255.4" r="5"/><circle cx="780.5" cy="258.4" r="5"/><circle cx="861.4" cy="259.5" r="5"/><circle cx="948.5" cy="262.6" r="5"/><circle cx="800.6" cy="264.4" r="5"/><circle cx="886.5" cy="267.4" r="5"/><circle cx="824.5" cy="271.4" r="5"/><circle cx="907.4" cy="271.4" r="5"/><circle cx="723.3" cy="272.4" r="5"/><circle cx="747.3" cy="273.3" r="5"/><circle cx="763.3" cy="273.4" r="5"/><circle cx="932.4" cy="275.4" r="5"/><circle cx="846.5" cy="278.4" r="5"/><circle cx="786.5" cy="279.4" r="5"/><circle cx="954.5" cy="281.4" r="5"/><circle cx="871.5" cy="284.3" r="5"/><circle cx="701.4" cy="289.3" r="5"/><circle cx="810.6" cy="289.3" r="5"/><circle cx="892.5" cy="289.3" r="5"/><circle cx="769.5" cy="291.3" r="5"/><circle cx="916.5" cy="291.5" r="5"/><circle cx="728.5" cy="295.5" r="5"/><circle cx="831.4" cy="295.5" r="5"/><circle cx="750.4" cy="296.5" r="5"/><circle cx="941.4" cy="298.4" r="5"/><circle cx="854.6" cy="300.4" r="5"/><circle cx="960.4" cy="304.4" r="5"/><circle cx="796.5" cy="306.4" r="5"/><circle cx="878.4" cy="306.4" r="5"/><circle cx="901.6" cy="309.4" r="5"/><circle cx="820.5" cy="312.3" r="5"/><circle cx="737.2" cy="314.4" r="5"/><circle cx="838.5" cy="315.4" r="5"/><circle cx="923.5" cy="315.4" r="5"/><circle cx="757.4" cy="317.3" r="5"/><circle cx="948.5" cy="318.4" r="5"/><circle cx="779.5" cy="320.4" r="5"/><circle cx="863.5" cy="322.4" r="5"/><circle cx="803.4" cy="325.4" r="5"/><circle cx="886.5" cy="326.4" r="5"/><circle cx="719.3" cy="329.4" r="5"/><circle cx="907.4" cy="332.5" r="5"/><circle cx="827.3" cy="334.5" r="5"/><circle cx="742.5" cy="335.5" r="5"/><circle cx="931.5" cy="335.5" r="5"/><circle cx="847.4" cy="337.3" r="5"/><circle cx="768.3" cy="341.3" r="5"/><circle cx="681.5" cy="343.5" r="5"/><circle cx="953.5" cy="343.4" r="5"/><circle cx="787.4" cy="344.5" r="5"/><circle cx="869.5" cy="344.5" r="5"/><circle cx="707.3" cy="346.5" r="5"/><circle cx="894.4" cy="348.5" r="5"/><circle cx="809.4" cy="350.5" r="5"/><circle cx="726.5" cy="352.5" r="5"/><circle cx="915.5" cy="355.5" r="5"/><circle cx="751.3" cy="357.5" r="5"/><circle cx="833.4" cy="357.5" r="5"/><circle cx="941.4" cy="358.5" r="5"/><circle cx="771.2" cy="361.5" r="5"/><circle cx="717.3" cy="363.5" r="5"/><circle cx="960.4" cy="363.4" r="5"/><circle cx="852.6" cy="364.5" r="5"/><circle cx="879.4" cy="364.5" r="5"/><circle cx="687.4" cy="366.6" r="5"/><circle cx="793.4" cy="367.6" r="5"/><circle cx="904.4" cy="368.4" r="5"/><circle cx="815.3" cy="371.6" r="5"/><circle cx="755.4" cy="374.6" r="5"/><circle cx="733.5" cy="375.6" r="5"/><circle cx="925.5" cy="375.6" r="5"/><circle cx="838.5" cy="378.4" r="5"/><circle cx="946.5" cy="381.6" r="5"/><circle cx="777.4" cy="384.5" r="5"/><circle cx="862.5" cy="383.5" r="5"/><circle cx="694.4" cy="389.5" r="5"/><circle cx="886.4" cy="389.5" r="5"/><circle cx="1006.4" cy="252.5" r="5"/><circle cx="968.6" cy="263.5" r="5"/><circle cx="991.3" cy="269.4" r="5"/><circle cx="1012.4" cy="274.4" r="5"/><circle cx="976.6" cy="286.5" r="5"/><circle cx="999.4" cy="290.5" r="5"/><circle cx="1021.4" cy="296.5" r="5"/><circle cx="983.5" cy="308.4" r="5"/><circle cx="1006.4" cy="314.4" r="5"/><circle cx="1029.4" cy="317.4" r="5"/><circle cx="1051.4" cy="324.4" r="5"/><circle cx="968.6" cy="325.4" r="5"/><circle cx="990.5" cy="331.4" r="5"/><circle cx="1014.5" cy="335.5" r="5"/><circle cx="1037.5" cy="343.3" r="5"/><circle cx="1063.4" cy="344.3" r="5"/><circle cx="974.4" cy="348.4" r="5"/><circle cx="999.4" cy="352.4" r="5"/><circle cx="1021.4" cy="358.4" r="5"/><circle cx="1043.5" cy="364.4" r="5"/><circle cx="1067.4" cy="368.4" r="5"/><circle cx="984.5" cy="370.4" r="5"/><circle cx="1005.4" cy="375.4" r="5"/><circle cx="1028.4" cy="379.4" r="5"/><circle cx="1048.5" cy="384.5" r="5"/><circle cx="966.5" cy="384.5" r="5"/><circle cx="992.5" cy="392.5" r="5"/><circle cx="931.4" cy="397.5" r="5"/><circle cx="1015.4" cy="397.5" r="5"/><circle cx="1038.5" cy="402.5" r="5"/><circle cx="1058.4" cy="403.5" r="5"/><circle cx="953.5" cy="403.5" r="5"/><circle cx="976.4" cy="406.5" r="5"/><circle cx="1000.5" cy="413.5" r="5"/><circle cx="1023.4" cy="419.6" r="5"/><circle cx="937.5" cy="420.6" r="5"/><circle cx="1042.5" cy="424.6" r="5"/><circle cx="959.4" cy="424.6" r="5"/><circle cx="982.5" cy="430.5" r="5"/><circle cx="1007.3" cy="435.5" r="5"/><circle cx="800.3" cy="390.5" r="5"/><circle cx="721.4" cy="391.5" r="5"/><circle cx="905.3" cy="393.3" r="5"/><circle cx="738.4" cy="395.5" r="5"/><circle cx="759.3" cy="398.5" r="5"/><circle cx="826.2" cy="399.5" r="5"/><circle cx="846.4" cy="400.5" r="5"/><circle cx="867.3" cy="405.5" r="5"/><circle cx="704.5" cy="407.5" r="5"/><circle cx="803.3" cy="407.5" r="5"/><circle cx="893.4" cy="408.5" r="5"/><circle cx="783.4" cy="409.4" r="5"/><circle cx="727.4" cy="413.4" r="5"/><circle cx="746.4" cy="415.5" r="5"/><circle cx="839.4" cy="420.6" r="5"/><circle cx="768.4" cy="423.4" r="5"/><circle cx="853.5" cy="423.4" r="5"/><circle cx="688.4" cy="424.4" r="5"/><circle cx="713.5" cy="426.4" r="5"/><circle cx="875.5" cy="427.4" r="5"/><circle cx="792.4" cy="430.4" r="5"/><circle cx="817.3" cy="430.4" r="5"/><circle cx="737.4" cy="432.5" r="5"/><circle cx="899.5" cy="432.5" r="5"/><circle cx="839.4" cy="439.5" r="5"/><circle cx="755.3" cy="441.5" r="5"/><circle cx="674.4" cy="442.5" r="5"/><circle cx="776.4" cy="443.5" r="5"/><circle cx="699.4" cy="444.5" r="5"/><circle cx="861.5" cy="444.5" r="5"/><circle cx="715.3" cy="449.5" r="5"/><circle cx="885.4" cy="449.5" r="5"/><circle cx="800.3" cy="450.5" r="5"/><circle cx="821.4" cy="455.5" r="5"/><circle cx="908.6" cy="454.5" r="5"/><circle cx="739.4" cy="459.5" r="5"/><circle cx="762.5" cy="460.5" r="5"/><circle cx="847.4" cy="461.5" r="5"/><circle cx="786.4" cy="464.5" r="5"/><circle cx="678.4" cy="466.6" r="5"/><circle cx="870.4" cy="466.6" r="5"/><circle cx="806.3" cy="470.4" r="5"/><circle cx="700.4" cy="471.4" r="5"/><circle cx="893.5" cy="471.4" r="5"/><circle cx="724.4" cy="475.4" r="5"/><circle cx="745.4" cy="479.4" r="5"/><circle cx="831.4" cy="479.4" r="5"/><circle cx="852.4" cy="484.5" r="5"/><circle cx="769.4" cy="485.5" r="5"/><circle cx="874.5" cy="488.5" r="5"/><circle cx="792.4" cy="490.5" r="5"/><circle cx="685.3" cy="491.5" r="5"/><circle cx="705.5" cy="493.5" r="5"/><circle cx="812.3" cy="494.5" r="5"/><circle cx="900.4" cy="495.3" r="5"/><circle cx="728.4" cy="497.5" r="5"/><circle cx="839.4" cy="500.5" r="5"/><circle cx="756.3" cy="502.5" r="5"/><circle cx="862.5" cy="505.5" r="5"/><circle cx="885.4" cy="508.5" r="5"/><circle cx="691.4" cy="510.5" r="5"/><circle cx="776.4" cy="510.5" r="5"/><circle cx="799.3" cy="511.5" r="5"/><circle cx="819.4" cy="512.5" r="5"/><circle cx="717.3" cy="515.5" r="5"/><circle cx="904.4" cy="517.4" r="5"/><circle cx="739.4" cy="521.6" r="5"/><circle cx="848.4" cy="524.4" r="5"/><circle cx="681.4" cy="526.4" r="5"/><circle cx="762.5" cy="526.4" r="5"/><circle cx="870.4" cy="527.4" r="5"/><circle cx="782.4" cy="530.4" r="5"/><circle cx="701.4" cy="532.5" r="5"/><circle cx="892.5" cy="532.5" r="5"/><circle cx="806.3" cy="534.5" r="5"/><circle cx="724.4" cy="537.5" r="5"/><circle cx="645.4" cy="538.5" r="5"/><circle cx="829.4" cy="539.5" r="5"/><circle cx="672.4" cy="542.5" r="5"/><circle cx="746.4" cy="543.5" r="5"/><circle cx="852.4" cy="546.5" r="5"/><circle cx="689.4" cy="548.5" r="5"/><circle cx="877.4" cy="548.5" r="5"/><circle cx="769.4" cy="549.5" r="5"/><circle cx="792.4" cy="551.5" r="5"/><circle cx="895.5" cy="553.5" r="5"/><circle cx="817.3" cy="555.5" r="5"/><circle cx="707.5" cy="559.5" r="5"/><circle cx="731.4" cy="559.5" r="5"/><circle cx="661.3" cy="560.5" r="5"/><circle cx="838.4" cy="563.5" r="5"/><circle cx="755.3" cy="565.5" r="5"/><circle cx="675.4" cy="567.6" r="5"/><circle cx="777.4" cy="568.6" r="5"/><circle cx="860.5" cy="568.6" r="5"/><circle cx="883.5" cy="569.6" r="5"/><circle cx="799.3" cy="570.6" r="5"/><circle cx="622.5" cy="572.6" r="5"/><circle cx="711.4" cy="576.5" r="5"/><circle cx="905.4" cy="578.4" r="5"/><circle cx="691.3" cy="579.5" r="5"/><circle cx="825.3" cy="579.5" r="5"/><circle cx="665.4" cy="582.5" r="5"/><circle cx="734.5" cy="581.5" r="5"/><circle cx="636.3" cy="584.5" r="5"/><circle cx="847.4" cy="584.5" r="5"/><circle cx="869.4" cy="587.5" r="5"/><circle cx="922.4" cy="438.5" r="5"/><circle cx="1029.5" cy="440.5" r="5"/><circle cx="948.4" cy="441.5" r="5"/><circle cx="966.4" cy="448.5" r="5"/><circle cx="990.4" cy="452.5" r="5"/><circle cx="935.3" cy="459.5" r="5"/><circle cx="1014.4" cy="460.5" r="5"/><circle cx="952.4" cy="461.5" r="5"/><circle cx="1019.4" cy="468.6" r="5"/><circle cx="974.5" cy="471.4" r="5"/><circle cx="913.4" cy="472.4" r="5"/><circle cx="1001.2" cy="475.4" r="5"/><circle cx="939.4" cy="482.5" r="5"/><circle cx="963.4" cy="486.5" r="5"/><circle cx="983.5" cy="492.5" r="5"/><circle cx="922.4" cy="498.5" r="5"/><circle cx="944.4" cy="503.5" r="5"/><circle cx="970.4" cy="509.5" r="5"/><circle cx="930.5" cy="517.4" r="5"/><circle cx="954.4" cy="525.4" r="5"/><circle cx="912.4" cy="537.5" r="5"/><circle cx="938.4" cy="544.5" r="5"/><circle cx="956.4" cy="545.5" r="5"/><circle cx="921.4" cy="561.5" r="5"/><circle cx="943.4" cy="568.6" r="5"/><circle cx="929.5" cy="586.5" r="5"/><circle cx="890.4" cy="594.5" r="5"/><circle cx="911.4" cy="600.5" r="5"/><circle cx="875.4" cy="612.5" r="5"/><circle cx="892.4" cy="614.5" r="5"/><circle cx="881.3" cy="628.4" r="5"/><circle cx="762.4" cy="591.5" r="5"/><circle cx="784.5" cy="591.5" r="5"/><circle cx="697.3" cy="597.5" r="5"/><circle cx="622.4" cy="598.5" r="5"/><circle cx="648.4" cy="599.5" r="5"/><circle cx="719.4" cy="600.5" r="5"/><circle cx="743.5" cy="602.5" r="5"/><circle cx="673.3" cy="604.5" r="5"/><circle cx="769.4" cy="605.5" r="5"/><circle cx="607.4" cy="615.4" r="5"/><circle cx="635.3" cy="616.4" r="5"/><circle cx="704.4" cy="619.4" r="5"/><circle cx="727.4" cy="619.4" r="5"/><circle cx="657.4" cy="620.4" r="5"/><circle cx="679.3" cy="626.5" r="5"/><circle cx="753.5" cy="626.5" r="5"/><circle cx="592.5" cy="630.5" r="5"/><circle cx="778.5" cy="631.4" r="5"/><circle cx="620.4" cy="633.5" r="5"/><circle cx="641.3" cy="635.5" r="5"/><circle cx="711.4" cy="639.5" r="5"/><circle cx="738.5" cy="642.5" r="5"/><circle cx="664.4" cy="643.5" r="5"/><circle cx="762.4" cy="647.5" r="5"/><circle cx="686.3" cy="648.5" r="5"/><circle cx="573.4" cy="649.5" r="5"/><circle cx="600.4" cy="651.5" r="5"/><circle cx="784.5" cy="654.5" r="5"/><circle cx="626.4" cy="655.5" r="5"/><circle cx="724.4" cy="660.4" r="5"/><circle cx="649.4" cy="660.4" r="5"/><circle cx="747.3" cy="664.4" r="5"/><circle cx="672.4" cy="665.4" r="5"/><circle cx="561.1" cy="665.4" r="5"/><circle cx="588.5" cy="666.4" r="5"/><circle cx="771.4" cy="669.4" r="5"/><circle cx="695.3" cy="670.4" r="5"/><circle cx="612.4" cy="672.5" r="5"/><circle cx="632.3" cy="678.5" r="5"/><circle cx="546.5" cy="679.5" r="5"/><circle cx="731.4" cy="681.5" r="5"/><circle cx="656.4" cy="682.5" r="5"/><circle cx="573.4" cy="684.5" r="5"/><circle cx="753.5" cy="686.5" r="5"/><circle cx="679.3" cy="687.5" r="5"/><circle cx="597.3" cy="688.5" r="5"/><circle cx="777.5" cy="688.5" r="5"/><circle cx="618.4" cy="692.5" r="5"/><circle cx="701.4" cy="692.5" r="5"/><circle cx="718.4" cy="696.5" r="5"/><circle cx="529.4" cy="698.5" r="5"/><circle cx="641.3" cy="699.5" r="5"/><circle cx="558.4" cy="700.5" r="5"/><circle cx="739.5" cy="703.5" r="5"/><circle cx="664.4" cy="704.5" r="5"/><circle cx="759.4" cy="704.5" r="5"/><circle cx="582.4" cy="706.6" r="5"/><circle cx="687.5" cy="709.6" r="5"/><circle cx="603.4" cy="711.4" r="5"/><circle cx="710.4" cy="714.4" r="5"/><circle cx="626.4" cy="716.4" r="5"/><circle cx="515.4" cy="718.4" r="5"/><circle cx="539.3" cy="718.4" r="5"/><circle cx="646.3" cy="719.4" r="5"/><circle cx="565.3" cy="723.5" r="5"/><circle cx="671.4" cy="725.5" r="5"/><circle cx="587.5" cy="728.5" r="5"/><circle cx="502.5" cy="731.5" r="5"/><circle cx="611.4" cy="733.5" r="5"/><circle cx="526.4" cy="735.5" r="5"/><circle cx="634.3" cy="738.5" r="5"/><circle cx="550.4" cy="740.5" r="5"/><circle cx="657.4" cy="742.5" r="5"/><circle cx="572.4" cy="745.5" r="5"/><circle cx="488.5" cy="749.5" r="5"/><circle cx="597.3" cy="751.5" r="5"/><circle cx="511.4" cy="753.5" r="5"/><circle cx="619.4" cy="755.5" r="5"/><circle cx="535.3" cy="757.6" r="5"/><circle cx="642.3" cy="758.6" r="5"/><circle cx="557.4" cy="762.6" r="5"/><circle cx="580.4" cy="767.5" r="5"/><circle cx="474.4" cy="768.5" r="5"/><circle cx="496.5" cy="771.5" r="5"/><circle cx="603.4" cy="772.5" r="5"/><circle cx="519.4" cy="776.5" r="5"/><circle cx="626.4" cy="777.5" r="5"/><circle cx="542.5" cy="780.5" r="5"/><circle cx="809.4" cy="594.5" r="5"/><circle cx="830.5" cy="601.5" r="5"/><circle cx="854.4" cy="604.5" r="5"/><circle cx="792.5" cy="615.5" r="5"/><circle cx="816.4" cy="618.6" r="5"/><circle cx="837.3" cy="619.6" r="5"/><circle cx="857.4" cy="625.4" r="5"/><circle cx="799.4" cy="639.5" r="5"/><circle cx="823.5" cy="640.5" r="5"/><circle cx="843.4" cy="643.5" r="5"/><circle cx="828.5" cy="656.5" r="5"/><circle cx="805.4" cy="657.5" r="5"/><circle cx="792.5" cy="672.4" r="5"/><circle cx="565.3" cy="785.5" r="5"/><circle cx="482.4" cy="786.5" r="5"/><circle cx="589.5" cy="790.5" r="5"/><circle cx="504.4" cy="791.5" r="5"/><circle cx="610.4" cy="794.5" r="5"/><circle cx="527.4" cy="797.5" r="5"/><circle cx="550.4" cy="801.5" r="5"/><circle cx="465.4" cy="803.5" r="5"/><circle cx="489.5" cy="806.6" r="5"/><circle cx="573.4" cy="807.6" r="5"/><circle cx="593.5" cy="812.4" r="5"/><circle cx="512.4" cy="813.4" r="5"/><circle cx="536.5" cy="818.4" r="5"/><circle cx="451.5" cy="819.4" r="5"/><circle cx="557.4" cy="824.5" r="5"/><circle cx="474.4" cy="825.5" r="5"/><circle cx="579.4" cy="828.5" r="5"/><circle cx="498.4" cy="830.5" r="5"/><circle cx="520.4" cy="835.5" r="5"/><circle cx="542.5" cy="840.5" r="5"/><circle cx="459.4" cy="843.5" r="5"/><circle cx="565.3" cy="845.5" r="5"/><circle cx="481.4" cy="848.5" r="5"/><circle cx="443.5" cy="851.5" r="5"/><circle cx="504.4" cy="853.5" r="5"/><circle cx="527.4" cy="857.4" r="5"/><circle cx="465.4" cy="862.4" r="5"/><circle cx="550.4" cy="863.4" r="5"/><circle cx="489.5" cy="870.4" r="5"/><circle cx="512.4" cy="874.5" r="5"/><circle cx="534.5" cy="880.5" r="5"/><circle cx="469.4" cy="887.5" r="5"/><circle cx="497.3" cy="892.5" r="5"/><circle cx="520.4" cy="896.5" r="5"/><circle cx="479.4" cy="908.6" r="5"/><circle cx="504.4" cy="914.4" r="5"/><circle cx="917.4" cy="416.3" r="5"/></g>
<g fill="#ff00ff" stroke="#3a0040" stroke-width="1.300"><circle cx="902.5" cy="63.4" r="5"/><circle cx="915.4" cy="75.5" r="5"/><circle cx="915.4" cy="84.4" r="5"/><circle cx="925.7" cy="99.3" r="5"/><circle cx="932.6" cy="123.1" r="5"/><circle cx="943.5" cy="150.6" r="5"/><circle cx="957.6" cy="162.5" r="5"/><circle cx="961.6" cy="181.6" r="5"/><circle cx="986.7" cy="187.6" r="5"/><circle cx="998.6" cy="200.5" r="5"/><circle cx="1006.8" cy="225.4" r="5"/><circle cx="1014.5" cy="244.5" r="5"/><circle cx="1020.7" cy="268.4" r="5"/><circle cx="1028.7" cy="288.5" r="5"/><circle cx="1040.5" cy="305.2" r="5"/><circle cx="1058.5" cy="316.4" r="5"/><circle cx="1071.4" cy="335.3" r="5"/><circle cx="1077.6" cy="350.4" r="5"/><circle cx="1079.4" cy="366.3" r="5"/><circle cx="1073.4" cy="390.5" r="5"/><circle cx="1068.4" cy="407.5" r="5"/><circle cx="1059.4" cy="426.4" r="5"/><circle cx="1048.4" cy="442.3" r="5"/><circle cx="1033.5" cy="455.5" r="5"/><circle cx="1015.4" cy="480.4" r="5"/><circle cx="991.4" cy="497.5" r="5"/><circle cx="984.5" cy="512.5" r="5"/><circle cx="982.5" cy="531.4" r="5"/><circle cx="968.4" cy="549.4" r="5"/><circle cx="959.4" cy="571.6" r="5"/><circle cx="951.5" cy="588.5" r="5"/><circle cx="933.5" cy="605.4" r="5"/><circle cx="915.4" cy="623.4" r="5"/><circle cx="897.4" cy="630.4" r="5"/><circle cx="781.5" cy="700.5" r="5"/><circle cx="761.4" cy="717.4" r="5"/><circle cx="748.5" cy="722.5" r="5"/><circle cx="727.4" cy="731.5" r="5"/><circle cx="687.5" cy="729.5" r="5"/><circle cx="703.4" cy="737.5" r="5"/><circle cx="680.3" cy="748.5" r="5"/><circle cx="663.4" cy="765.4" r="5"/><circle cx="884.5" cy="645.5" r="5"/><circle cx="867.4" cy="651.5" r="5"/><circle cx="847.4" cy="669.4" r="5"/><circle cx="833.5" cy="677.4" r="5"/><circle cx="812.4" cy="672.4" r="5"/><circle cx="796.5" cy="691.5" r="5"/><circle cx="650.4" cy="782.5" r="5"/><circle cx="634.3" cy="799.5" r="5"/><circle cx="617.4" cy="817.4" r="5"/><circle cx="602.4" cy="833.5" r="5"/><circle cx="587.5" cy="850.5" r="5"/><circle cx="573.4" cy="868.4" r="5"/><circle cx="557.4" cy="884.5" r="5"/><circle cx="542.5" cy="899.5" r="5"/><circle cx="526.4" cy="918.4" r="5"/><circle cx="486.5" cy="927.5" r="5"/><circle cx="507.4" cy="929.5" r="5"/></g></svg></div>
<div class="a" style="left:1476px;top:425px;width:812px;height:953px;border-radius:16px;background:#f0f0f0;box-shadow:0 0 0 1.5px #a2a2a2,0 30px 70px 4px rgba(0,0,0,.24),0 6px 24px rgba(0,0,0,.12);overflow:hidden">
<div class="a" style="left:0;top:0;width:812px;height:57px;background:#f3f3f3"></div>
<svg class="a" style="left:19px;top:14px" width="20" height="28" viewBox="0 0 24 32"><rect x="1" y="1" width="22" height="30" rx="6" fill="#f7d51c"/><rect x="1" y="1" width="7" height="30" rx="3" fill="#d9a90c"/><rect x="17" y="1" width="6" height="30" rx="3" fill="#e2b80f"/><ellipse cx="12" cy="5" rx="6" ry="3" fill="#fbf3b0"/><path d="M5 12v9M5 16.500h5M10 12v9M14 12v9M14 12h5M14 16.500h4" stroke="#111" stroke-width="2.200" fill="none"/></svg>
<div class="t " style="left:55.5px;top:18.7px;font-size:24px;color:#8c8c8c;letter-spacing:-0.1px">I-Blast - Loading holes</div>
<svg class="a" style="left:554px;top:0" width="240" height="57" viewBox="0 0 240 57" fill="none" stroke-width="1.600"><path d="M15 27.500h20" stroke="#6a6a6a"/><rect x="107" y="19" width="18.500" height="18.500" rx="3" stroke="#d0d0d0"/><path d="M199 18l20 20M219 18l-20 20" stroke="#6a6a6a"/></svg>
<div class="a" style="left:0;top:57px;width:812px;height:851px;background:#ffcb2f"></div>
<div class="t " style="left:17px;top:72.4px;font-size:21.33px;letter-spacing:0.2px">Select a template</div>
<div class="a" style="left:14px;top:96px;width:266px;height:639px;background:#fff;border:2px solid #7f7a5a;border-right:3px solid #ffeb9c;border-bottom:3px solid #ffeb9c;box-shadow:inset 1px 1px 0 #d8c060"></div>
<div class="t " style="left:17px;top:103.4px;font-size:21.33px;">D114</div>
<div class="t " style="left:17px;top:133.4px;font-size:21.33px;">D165</div>
<div class="t " style="left:17px;top:163.4px;font-size:21.33px;">D205_2Decks</div>
<div class="t " style="left:17px;top:193.4px;font-size:21.33px;">D205_Full_B2m</div>
<div class="t " style="left:17px;top:223.4px;font-size:21.33px;">D205_Full_B3.5m</div>
<div class="t " style="left:17px;top:253.4px;font-size:21.33px;">D205_Full_B7.5m</div>
<div class="t " style="left:17px;top:283.4px;font-size:21.33px;">D222</div>
<div class="a" style="left:17px;top:309px;width:260px;height:30px;background:#0078d7"></div>
<div class="t " style="left:17px;top:313.4px;font-size:21.33px;color:#fff">DEMO</div>
<div class="t " style="left:17px;top:343.4px;font-size:21.33px;">MOD_B1848H_707595</div>
<div class="a" style="left:295px;top:101px;width:503px;height:635px;background:#fff;border:1.5px solid #000"></div>
<svg class="a" style="left:295px;top:101px;font-family:'Liberation Sans',sans-serif" width="503" height="635" viewBox="0 0 503 635"><defs><pattern id="ht" width="5" height="5" patternUnits="userSpaceOnUse" patternTransform="rotate(-50)"><rect width="5" height="5" fill="#f2f2f2"/><path d="M0 0H5" stroke="#9a9a9a" stroke-width="1.300"/></pattern></defs><path d="M3 21.5H501" stroke="#222" stroke-width="2.500"/><rect x="235.5" y="22" width="37" height="189" fill="#c0c0c0"/><rect x="235.5" y="211" width="37" height="407" fill="url(#ht)"/><path d="M235.5 22V618M272.5 22V618" stroke="#000" stroke-width="1.200"/><path d="M2 211.5H501M2 618.5H501" stroke="#000" stroke-width="1" stroke-dasharray="2 1.500"/><rect x="252.5" y="599" width="4.500" height="19" fill="#333"/><text x="7.0" y="49.0" font-size="29.33" fill="#0000cd" letter-spacing="1.6">0 m</text><text x="7.0" y="240.0" font-size="29.33" fill="#0000cd" letter-spacing="1.6">3.5 m</text><text x="278.0" y="126.5" font-size="29.33" fill="#0000cd" letter-spacing="0.85">Gravier</text><text x="278.0" y="404.0" font-size="29.33" fill="#0000cd" letter-spacing="1.0">New bulk</text><text x="102.5" y="390.0" font-size="29.33" fill="#0000cd" letter-spacing="1.35">247.5 kg</text><text x="102.5" y="426.5" font-size="29.33" fill="#0000cd" letter-spacing="1.5">7.5 m</text><text x="16.0" y="463.5" font-size="26.67" fill="#808080" letter-spacing="-0.35">6.8kg &lt; Adjustable</text><text x="278.0" y="610.0" font-size="29.33" fill="#000" letter-spacing="1.7">0ms</text><text x="8.0" y="632.5" font-size="15.5" fill="#1a1a99" letter-spacing="0.1">11m</text></svg>
<div class="a" style="left:19.5px;top:741px;width:26px;height:25px;background:#fff;border:2.500px solid #6e6e6e;border-right:2px solid #f3f3f3;border-bottom:2px solid #f3f3f3"></div>
<div class="t " style="left:52px;top:744.4px;font-size:21.33px;">All</div>
<div class="a" style="left:458.5px;top:741px;width:26px;height:25px;background:#fff;border:2.500px solid #6e6e6e;border-right:2px solid #f3f3f3;border-bottom:2px solid #f3f3f3"></div>
<div class="t " style="left:491px;top:744.4px;font-size:21.33px;">Save Name as Type</div>
<div class="a" style="left:13px;top:794px;width:789px;height:47.5px;background:#fbfbfb;border:1.5px solid #a8a8a8"></div><div class="t cm" style="left:13px;width:789px;text-align:center;top:807.7px;font-size:21px">Load selected holes</div>
<div class="a" style="left:13px;top:852px;width:789px;height:47.5px;background:#fbfbfb;border:1.5px solid #a8a8a8"></div><div class="t cm" style="left:13px;width:789px;text-align:center;top:865.7px;font-size:21px">Load empty holes</div>
<div class="a" style="left:705.5px;top:910px;width:1px;height:42px;background:#dcdcdc"></div>
<div class="a" style="left:777px;top:910px;width:1px;height:42px;background:#dcdcdc"></div>
<svg class="a" style="left:790px;top:932px" width="16" height="16"><rect x="10" y="0" width="3.500" height="3.500" fill="#b8b8b8"/><rect x="5" y="5" width="3.500" height="3.500" fill="#b8b8b8"/><rect x="10" y="5" width="3.500" height="3.500" fill="#b8b8b8"/><rect x="0" y="10" width="3.500" height="3.500" fill="#b8b8b8"/><rect x="5" y="10" width="3.500" height="3.500" fill="#b8b8b8"/><rect x="10" y="10" width="3.500" height="3.500" fill="#b8b8b8"/></svg>
</div>
<div class="a" id="status">
 <div class="a" style="left:1130px;top:2px;width:1.5px;height:42px;background:#dedede"></div>
 <div class="a" style="left:1743px;top:2px;width:1.5px;height:42px;background:#dedede"></div>
 <div class="a" style="left:1943px;top:2px;width:1.5px;height:42px;background:#dedede"></div>
 <div class="a" style="left:2159px;top:2px;width:1.5px;height:42px;background:#dedede"></div>
 <div class="a" style="left:2359px;top:2px;width:1.5px;height:42px;background:#dedede"></div>
 <div class="a" style="left:2557px;top:2px;width:1.5px;height:42px;background:#dedede"></div>
 <div class="t" style="left:2163px;top:12.5px">Scenario #0</div>
 <div class="t" style="left:2363px;top:12.5px">ISO UNITS</div>
</div>

</body>
</html>
